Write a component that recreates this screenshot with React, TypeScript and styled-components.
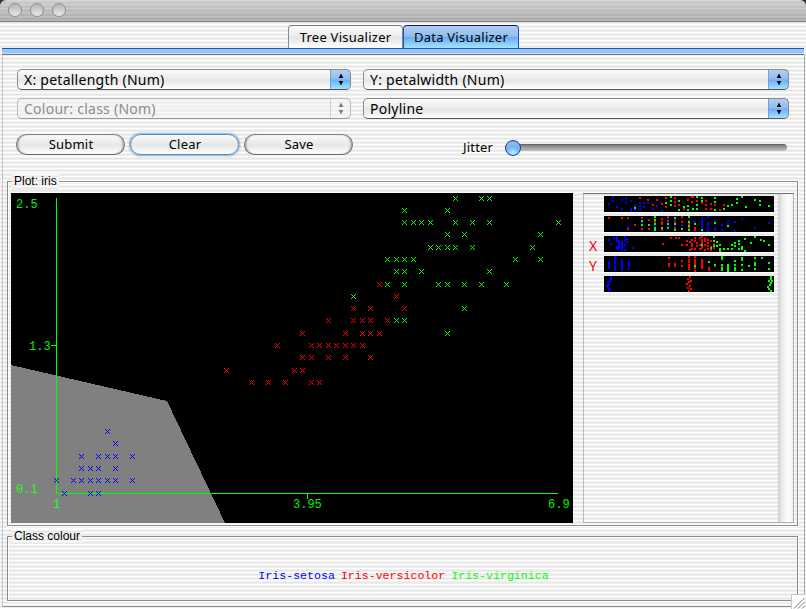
import React from 'react';
import styled, { createGlobalStyle, css } from 'styled-components';

const GlobalStyle = createGlobalStyle`
  * { box-sizing: border-box; }
  html, body { margin: 0; padding: 0; background: #fff; }
  body { overflow: hidden; }
`;

const stripes = 'repeating-linear-gradient(to bottom, #ffffff 0 1px, #f1f1f1 1px 2px, #e7e7e7 2px 3px, #eeeeee 3px 4px)';
const uiFont = '"Noto Sans", "Open Sans", sans-serif';
const blueFill = 'linear-gradient(to bottom, #b4cff0 0%, #8fbcee 48%, #69aef5 52%, #a4e2ff 100%)';
const greyFill = 'linear-gradient(to bottom, #fdfdfd 0%, #ececec 45%, #e4e4e4 52%, #ffffff 100%)';

const Window = styled.div`
  width: 806px;
  height: 609px;
  display: flex;
  flex-direction: column;
  background: ${stripes};
  font-family: ${uiFont};
  font-size: 13px;
  color: #000;
  position: relative;
`;

const TitleBar = styled.div`
  height: 22px;
  flex: none;
  display: flex;
  align-items: center;
  gap: 8px;
  padding: 0 0 2px 8px;
  border-bottom: 1px solid #7e7e7e;
  border-radius: 6px 6px 0 0;
  background:
    repeating-linear-gradient(to bottom, rgba(255,255,255,.16) 0 1px, transparent 1px 2px, rgba(0,0,0,.02) 2px 4px),
    linear-gradient(to bottom, #cfcfcf, #b0b0b0);
`;

const TitleBacking = styled.div`
  flex: none;
  background: #333;
`;

const WindowButton = styled.span`
  width: 14px;
  height: 14px;
  border-radius: 50%;
  border: 1px solid #8e8e8e;
  background: linear-gradient(to bottom, #b5b5b5, #d4d4d4 60%, #e8e8e8);
`;

const Body = styled.div`
  flex: 1;
  display: flex;
  flex-direction: column;
  margin: 0 1px 2px 1px;
`;

const TabRow = styled.div`
  height: 26px;
  display: flex;
  justify-content: center;
  align-items: flex-end;
  padding: 3px 0 0 1px;
`;

const Tab = styled.div<{ $active?: boolean }>`
  height: 23px;
  width: ${p => (p.$active ? 116 : 115)}px;
  display: flex;
  align-items: center;
  justify-content: center;
  border: 1px solid ${p => (p.$active ? '#1d55b4' : '#8a8a8a')};
  border-top-color: ${p => (p.$active ? '#10108c' : '#777')};
  border-bottom: 0;
  border-radius: 4px 4px 0 0;
  background: ${p => (p.$active ? blueFill : greyFill)};
  letter-spacing: .25px;
`;

const TabBar = styled.div`
  height: 7px;
  border-top: 1px solid #0d5cb8;
  border-bottom: 1px solid #6f7680;
  background: linear-gradient(to bottom, #a9c9ee, #8fc0f4 55%, #c4e4ff);
  margin-left: 1px;
  margin-right: 1px;
`;

const Panel = styled.div`
  flex: 1;
  display: flex;
  flex-direction: column;
  margin-left: 1px;
  border-right: 1px solid #a9a9a9;
  border-left: 1px solid #c4c4c4;
  border-bottom: 1px solid #8d8d8d;
  padding: 14px 6px 0 4px;
`;

const Controls = styled.div`
  display: grid;
  grid-template-columns: 334px 426px;
  column-gap: 12px;
  row-gap: 8px;
  padding-left: 10px;
`;

const ComboBox = styled.div<{ $disabled?: boolean }>`
  height: 21px;
  display: flex;
  border: 1px solid #8b8b8b;
  border-bottom-color: #555;
  border-radius: 5px;
  overflow: hidden;
  background: linear-gradient(to bottom, #fbfbfb 0%, #ebebeb 45%, #e4e4e4 52%, #ffffff 100%);
  ${p => p.$disabled && css`
    color: #8c8c8c;
    border-color: #b9b9b9;
    border-bottom-color: #999;
    background: #f4f4f488;
  `}
`;

const ComboText = styled.span`
  flex: 1;
  font-size: 14px;
  line-height: 19px;
  padding-left: 6px;
  letter-spacing: .25px;
`;

const ComboArrows = styled.span<{ $disabled?: boolean }>`
  width: 21px;
  margin: -1px -1px -1px 0;
  display: flex;
  align-items: center;
  justify-content: center;
  border-radius: 0 5px 5px 0;
  border: 1px solid ${p => (p.$disabled ? '#b9b9b9' : '#1b5db8')};
  border-top-color: ${p => (p.$disabled ? '#b9b9b9' : '#15157a')};
  border-bottom-color: ${p => (p.$disabled ? '#999' : '#4b7182')};
  border-left-color: ${p => (p.$disabled ? '#cfcfcf' : '#6ba2e0')};
  background: ${p => (p.$disabled ? 'transparent' : blueFill)};
  color: ${p => (p.$disabled ? '#7d7d7d' : '#000')};
`;

const ButtonGroup = styled.div`
  display: flex;
  gap: 5px;
  margin-left: -1px;
`;

const ActionRow = styled.div`
  display: grid;
  grid-template-columns: 337px 1fr;
  margin-top: 15px;
  padding-left: 10px;
  height: 42px;
`;

const PushButton = styled.div<{ $focus?: boolean }>`
  width: 109px;
  height: 21px;
  border-radius: 11px;
  border: 1px solid ${p => (p.$focus ? '#5e86ad' : '#6f6f6f')};
  border-top-color: ${p => (p.$focus ? '#5e86ad' : '#848484')};
  box-shadow: ${p => (p.$focus ? '0 0 2px 1px #7fb0e0' : 'inset 2px 0 2px -1px #999, inset -2px 0 2px -1px #999')};
  background: linear-gradient(to bottom, #fafafa 0%, #eaeaea 45%, #e6e6e6 52%, #ffffff 100%);
  line-height: 19px;
  text-align: center;
  letter-spacing: .2px;
  padding-left: 1px;
`;

const SliderGroup = styled.div`
  display: flex;
  align-items: center;
  margin: 5px 0 0 109px;
  height: 17px;
`;

const SliderLabel = styled.span`
  width: 42px;
  margin-top: -2px;
  letter-spacing: .2px;
`;

const Track = styled.div`
  width: 282px;
  height: 7px;
  border-radius: 4px;
  background: linear-gradient(to bottom, #5c5c5c, #8d8d8d 30%, #c2c2c2);
  display: flex;
  align-items: center;
`;

const Thumb = styled.span`
  width: 16px;
  height: 16px;
  border-radius: 50%;
  border: 1px solid #223f96;
  background: radial-gradient(circle at 50% 85%, #baf4ff 0%, #6bb5f5 45%, #8fb9ee 75%, #5c86cc 100%);
`;

const Group = styled.section<{ $height: number; $gap: number }>`
  height: ${p => p.$height}px;
  margin-top: ${p => p.$gap}px;
  border: 1px solid #8b8b8b;
  box-shadow: inset 1px 1px 0 #fff, 0 1px 0 #fff, 1px 0 0 #fff;
  display: flex;
  flex-direction: column;
`;

const GroupTitle = styled.h2`
  align-self: flex-start;
  margin: -8px 0 0 4px;
  padding: 0 2px;
  height: 15px;
  font: normal 12px/15px "Liberation Sans", Arial, sans-serif;
  letter-spacing: 0;
  background: ${stripes};
`;

const PlotRow = styled.div`
  display: flex;
  gap: 10px;
  margin: 4px 0 0 3px;
  height: 330px;
`;

const Plot = styled.svg`
  width: 562px;
  height: 330px;
  display: block;
  background: #000;
  font: 12px "Liberation Mono", monospace;
`;

const AttributePane = styled.div`
  width: 211px;
  display: flex;
  border: 1px solid #b5b5b5;
  border-top: 1px solid #707070;
  border-left-color: #b9b9b9;
`;

const AttributeList = styled.div`
  flex: 1;
  display: flex;
  flex-direction: column;
  gap: 4px;
  padding-top: 2px;
`;

const AttributeRow = styled.div`
  display: flex;
  height: 16px;
`;

const AxisMark = styled.span`
  width: 20px;
  padding-left: 5px;
  color: #f00;
  font: 14px/19px "Noto Sans", sans-serif;
`;

const Strip = styled.svg`
  width: 170px;
  height: 16px;
  display: block;
  background: #000;
`;

const ScrollTrough = styled.div`
  width: 15px;
  background: linear-gradient(to right, #d2d2d2, #f0f0f0 35%, #ffffff 75%, #f0f0f0);
`;

const Legend = styled.div`
  display: flex;
  justify-content: center;
  gap: 6px;
  margin: 25px 0 0 2px;
  font: 11.6px/14px "Liberation Mono", monospace;
`;

const LegendItem = styled.span<{ $color: string }>`
  color: ${p => p.$color};
`;

const Grip = styled.svg`
  position: absolute;
  right: 1px;
  bottom: 0;
  width: 14px;
  height: 15px;
`;

const BLUE = '#0000ff';
const RED = '#ff0000';
const GREEN = '#00ff00';

// Petal lengths grouped by petal width, one set per species.
const samples: { color: string; rows: Record<string, number[]> }[] = [
  {
    color: BLUE,
    rows: {
      '0.1': [1.1, 1.4, 1.5],
      '0.2': [1.0, 1.2, 1.3, 1.4, 1.5, 1.6, 1.7, 1.9],
      '0.3': [1.3, 1.4, 1.5, 1.7],
      '0.4': [1.3, 1.5, 1.6, 1.7, 1.9],
      '0.5': [1.7],
      '0.6': [1.6],
    },
  },
  {
    color: RED,
    rows: {
      '1.0': [3.3, 3.5, 3.7, 4.0, 4.1],
      '1.1': [3.0, 3.8, 3.9],
      '1.2': [3.9, 4.0, 4.2, 4.4, 4.7],
      '1.3': [3.6, 4.0, 4.1, 4.2, 4.3, 4.4, 4.5, 4.6],
      '1.4': [3.9, 4.4, 4.6, 4.7, 4.8],
      '1.5': [4.2, 4.5, 4.6, 4.7, 4.9],
      '1.6': [4.5, 4.7, 5.1],
      '1.7': [5.0],
      '1.8': [4.8],
    },
  },
  {
    color: GREEN,
    rows: {
      '1.4': [5.6],
      '1.5': [5.0, 5.1],
      '1.6': [5.8],
      '1.7': [4.5],
      '1.8': [4.9, 5.1, 5.5, 5.6, 5.8, 6.0, 6.3],
      '1.9': [5.0, 5.1, 5.3, 6.1],
      '2.0': [4.9, 5.0, 5.1, 5.2, 6.4, 6.7],
      '2.1': [5.4, 5.5, 5.6, 5.7, 5.9, 6.6],
      '2.2': [5.6, 5.8, 6.7],
      '2.3': [5.1, 5.2, 5.3, 5.4, 5.7, 5.9, 6.1, 6.9],
      '2.4': [5.1, 5.6],
      '2.5': [5.7, 6.0, 6.1],
    },
  },
];

const plotX = (v: number) => Math.floor(45 + ((v - 1) * 502) / 5.9 + 1e-6);
const plotY = (v: number) => Math.floor(300 - ((v - 0.1) * 295) / 2.4 + 1e-6);

// A five pixel cross made of single pixel cells.
const cross = (x: number, y: number) =>
  [[-2, -2], [2, -2], [-1, -1], [1, -1], [0, 0], [-1, 1], [1, 1], [-2, 2], [2, 2]]
    .map(([dx, dy]) => `M${x + dx} ${y + dy}h1v1h-1z`)
    .join('');

const crossPath = (rows: Record<string, number[]>) =>
  Object.entries(rows)
    .flatMap(([w, lengths]) => lengths.map(l => cross(plotX(l), plotY(Number(w)))))
    .join('');

type StripData = { mark?: string; b: string; r: string; g: string };

// Each entry is "x:y,y,y", the top left corners of 2px dots in one column.
const strips: StripData[] = [
  {
    b: '4:7 8:0,4 12:10 17:3,12 21:1,6 26:4,12,14 30:9,13 35:6,9,12 39:6,10 43:6 48:12 52:9 56:5 57:14',
    r: '35:1 43:3 48:8 52:3 57:7 61:1,10 70:1,5,9 74:8 79:12 83:3 87:0,5 88:0 92:4 97:6 101:4,8,12 106:7,12 110:8 115:13 119:8',
    g: '30:11 61:6 66:0,4,8 74:4,13 79:10 83:9,13 88:12 92:0,8,12 97:1,4 110:1,5,13 119:12 123:9 127:8 132:2,6 137:0 141:10 150:3 155:4,8 164:9',
  },
  {
    b: '23:10 37:6 50:9 63:2,5,9 70:3,9 77:8 84:3 90:5 97:1,4,6,8,10,14 103:0,6,8,11,14 110:3,11,13 117:8,13 123:4,7 130:5,14 137:2 150:11 164:6',
    r: '4:1 17:1 23:1,12 30:8 37:1,12 44:3,12 50:5 57:2,5,7,13 63:0,4 70:5,11 77:0,5 84:7,11 90:11,13',
    g: '37:4,8 44:8 50:0,3,7,11,13 57:11 63:7,11 70:1,7,13 77:12 84:0,5,9,13 90:7 97:13 110:6 123:9',
  },
  {
    mark: 'X',
    b: '4:3 6:7 9:1 12:0,2,4,10,12 14:4,6,8,10,12 17:5,7,9,11,13 20:0,3,8,13 22:2,5 28:11',
    r: '58:7 66:1 71:1 74:1 77:8 82:4,8 85:5,13 87:3,7,9,12 90:1,4,12 92:6,9 95:1,8,12 97:0,3,5,7,9,11 100:2,4,8,13 103:3,6,9,12 106:4,10,13 109:7,11',
    g: '97:8 106:11 109:0,4,9 112:5,9 115:8,12,14 119:12 123:12 127:8,12 130:6,9 134:4,7,12 137:10,12 140:2,14 146:6 150:0 156:3 159:4 164:8',
  },
  {
    mark: 'Y',
    b: '4:5,7,9,11 10:0,2,4,6,9,11,13 17:3,5,7,9,11,13 24:5,7,9,12',
    r: '64:1,7,9 70:7,9 77:4,9 84:0,3,5,8,10,12 90:0,3,5,7,11,14 97:3,5,7,9,11 104:11,13 110:9 117:10',
    g: '90:9 104:5 110:8 117:0,2,8,11,13 123:8,10,12,14 130:4,8,11,13 137:1,3,8,13 144:9 150:1,6,8,12 157:1 164:6,12',
  },
  {
    b: '6:0,2 5:4 3:5,6 4:8 2:9 3:11 5:12 4:14',
    r: '85:0 83:2 86:4 84:5 82:7 85:9 83:11 86:12 84:14',
    g: '166:0,2 164:4 167:4 166:6 165:8 163:10 164:12 166:14',
  },
];

const dots = (spec: string) =>
  spec
    .split(' ')
    .flatMap(col => {
      const [x, ys] = col.split(':');
      return ys.split(',').map(y => `M${x} ${y}h2v2h-2z`);
    })
    .join('');

const Arrows = () => (
  <svg width="8" height="13" viewBox="0 0 8 13" fill="currentColor">
    <path d="M4 0.5L6.3 5H1.7zM4 12.5L6.3 8H1.7z" />
  </svg>
);

const Combo = ({ label, disabled }: { label: string; disabled?: boolean }) => (
  <ComboBox $disabled={disabled}>
    <ComboText>{label}</ComboText>
    <ComboArrows $disabled={disabled}>
      <Arrows />
    </ComboArrows>
  </ComboBox>
);

const ScatterPlot = () => (
  <Plot viewBox="0 0 562 330" shapeRendering="crispEdges">
    <path d="M0 172L156 208L214 330H0z" fill="#808080" />
    <path d="M45 5h1v296h-1zM45 300h502v1h-502zM40 152h6v1h-6zM296 300h1v6h-1z" fill={GREEN} />
    {samples.map(s => (
      <path key={s.color} d={crossPath(s.rows)} fill={s.color} />
    ))}
    <g fill="#00f000">
      <text x="5" y="15">2.5</text>
      <text x="18" y="157">1.3</text>
      <text x="5" y="300" fill="#20ff20">0.1</text>
      <text x="42" y="315" fill="#20ff20">1</text>
      <text x="282" y="315">3.95</text>
      <text x="537" y="315">6.9</text>
    </g>
  </Plot>
);

export default function App() {
  return (
    <Window>
      <GlobalStyle />
      <TitleBacking>
        <TitleBar>
          <WindowButton />
          <WindowButton />
          <WindowButton />
        </TitleBar>
      </TitleBacking>
      <Body>
        <TabRow>
          <Tab>Tree Visualizer</Tab>
          <Tab $active>Data Visualizer</Tab>
        </TabRow>
        <TabBar />
        <Panel>
          <Controls>
            <Combo label="X: petallength (Num)" />
            <Combo label="Y: petalwidth (Num)" />
            <Combo label="Colour: class (Nom)" disabled />
            <Combo label="Polyline" />
          </Controls>
          <ActionRow>
            <ButtonGroup>
              <PushButton>Submit</PushButton>
              <PushButton $focus>Clear</PushButton>
              <PushButton>Save</PushButton>
            </ButtonGroup>
            <SliderGroup>
              <SliderLabel>Jitter</SliderLabel>
              <Track>
                <Thumb />
              </Track>
            </SliderGroup>
          </ActionRow>
          <Group $height={345} $gap={5}>
            <GroupTitle>Plot: iris</GroupTitle>
            <PlotRow>
              <ScatterPlot />
              <AttributePane>
                <AttributeList>
                  {strips.map((s, i) => (
                    <AttributeRow key={i}>
                      <AxisMark>{s.mark}</AxisMark>
                      <Strip viewBox="0 0 170 16" shapeRendering="crispEdges">
                        <path d={dots(s.b)} fill={BLUE} />
                        <path d={dots(s.r)} fill={RED} />
                        <path d={dots(s.g)} fill={GREEN} />
                      </Strip>
                    </AttributeRow>
                  ))}
                </AttributeList>
                <ScrollTrough />
              </AttributePane>
            </PlotRow>
          </Group>
          <Group $height={65} $gap={10}>
            <GroupTitle>Class colour</GroupTitle>
            <Legend>
              <LegendItem $color={BLUE}>Iris-setosa</LegendItem>
              <LegendItem $color={RED}>Iris-versicolor</LegendItem>
              <LegendItem $color={GREEN}>Iris-virginica</LegendItem>
            </Legend>
          </Group>
        </Panel>
      </Body>
      <Grip viewBox="0 0 14 15">
        <path d="M0 0h14v15H0z" fill="#fff" />
        <path d="M0.5 15V.5H14" fill="none" stroke="#c8c8c8" />
        <path d="M3 14.5L14 3.5M7 14.5L14 7.5M11 14.5L14 11.5" stroke="#777" fill="none" />
      </Grip>
    </Window>
  );
}
